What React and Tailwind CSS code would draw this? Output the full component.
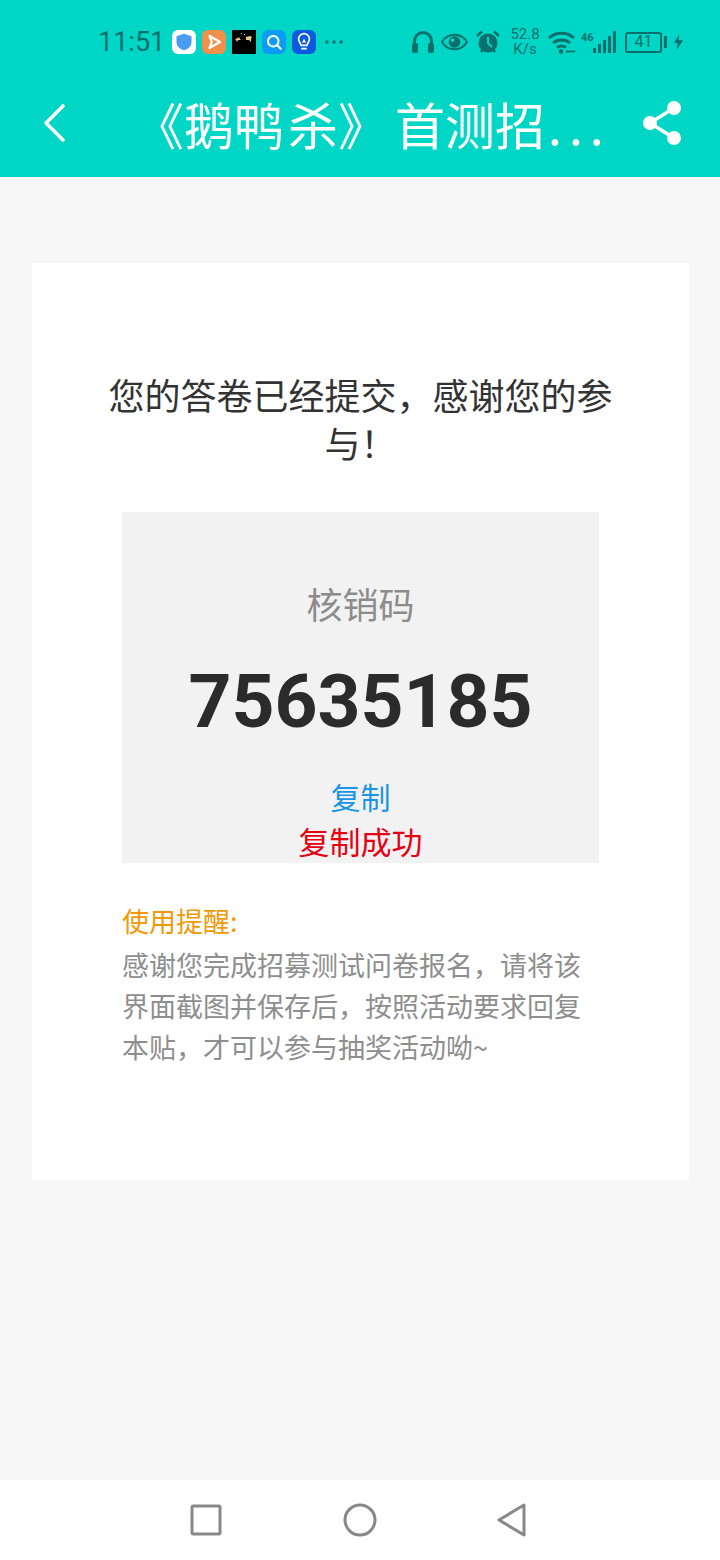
const cjk = { fontFamily: '"Noto Sans CJK SC", sans-serif' }

function StatusBar() {
  return (
    <div className="flex h-[84px] items-center pl-[98px] pr-[37px] text-[#0b6f6b]">
      <span className="text-[27px] leading-none font-['Roboto',sans-serif]">11:51</span>
      <div className="ml-[7px] flex items-center gap-[6px]">
        <span className="flex h-6 w-6 items-center justify-center rounded-[6px] bg-white">
          <svg viewBox="0 0 24 24" className="h-5 w-5"><path d="M12 2l9 3v7c0 5-4 8.500-9 10-5-1.500-9-5-9-10V5z" fill="#4a9cf0" /></svg>
        </span>
        <span className="flex h-6 w-6 items-center justify-center rounded-[6px] bg-[#f0904a]">
          <svg viewBox="0 0 24 24" className="h-[18px] w-[18px]"><path d="M6 4l14 8-14 8 3-8z" fill="none" stroke="#fff" strokeWidth="3" strokeLinejoin="round" /></svg>
        </span>
        <span className="flex h-6 w-6 items-start justify-center bg-black">
          <svg viewBox="0 0 24 24" className="h-6 w-6"><path d="M14 7l4-1 2 1-1 2 0 3-2-2-3 0zM3 9l3-1 1-1 1 2 1 1-3 0-1 2-1-2zM9 3h1v1H9zM12 4h1v1h-1z" fill="#eccb8f" /></svg>
        </span>
        <span className="flex h-6 w-6 items-center justify-center rounded-[6px] bg-[#0c9cf5]">
          <svg viewBox="0 0 24 24" className="h-[18px] w-[18px]" fill="none" stroke="#fff" strokeWidth="2.600" strokeLinecap="round"><circle cx="11" cy="11" r="7" /><path d="M16 16l5 5" /></svg>
        </span>
        <span className="flex h-6 w-6 items-center justify-center rounded-[6px] bg-[#0b5be0]">
          <svg viewBox="0 0 24 24" className="h-5 w-5" fill="none" stroke="#fff" strokeWidth="2" strokeLinecap="round"><path d="M8.500 16c0-2-3-3.500-3-7.500a6.500 6.500 0 0113 0c0 4-3 5.500-3 7.500zM9.500 20h5M11 12l1-2 1 2" /></svg>
        </span>
        <svg viewBox="0 0 18 4" className="ml-[3px] h-1 w-[18px]" fill="#0b6f6b"><circle cx="2" cy="2" r="1.700" /><circle cx="9" cy="2" r="1.700" /><circle cx="16" cy="2" r="1.700" /></svg>
      </div>
      <div className="ml-auto flex items-center">
        <svg viewBox="0 0 22 24" className="h-6 w-[22px]" fill="none" stroke="#0b6f6b" strokeWidth="3"><path d="M2.500 17v-6a8.500 8.500 0 0117 0v6" /><rect x="0" y="13" width="6" height="10" rx="2" fill="#0b6f6b" stroke="none" /><rect x="16" y="13" width="6" height="10" rx="2" fill="#0b6f6b" stroke="none" /></svg>
        <svg viewBox="0 0 28 18" className="ml-[7px] h-[18px] w-[27px]"><path d="M1 9c3-5 8-7.500 13-7.500S24 4 27 9c-3 5-8 7.500-13 7.500S4 14 1 9z" fill="none" stroke="#0b6f6b" strokeWidth="2.200" /><circle cx="14" cy="9" r="6" fill="#0b6f6b" /><circle cx="12" cy="7" r="2" fill="#00d6c6" /></svg>
        <svg viewBox="0 0 24 24" className="ml-[8px] h-6 w-6"><circle cx="12" cy="13" r="9.500" fill="#0b6f6b" /><path d="M12 7v6l4 4" fill="none" stroke="#00d6c6" strokeWidth="2" /><path d="M1 6l5-4.500M23 6l-5-4.500M5 22l2-2.500M19 22l-2-2.500" stroke="#0b6f6b" strokeWidth="2.500" /></svg>
        <span className="ml-[10px] flex w-[30px] flex-col items-center text-[15px] leading-[15px] font-['Roboto',sans-serif]"><span>52.8</span><span>K/s</span></span>
        <svg viewBox="0 0 27 24" className="ml-[8px] h-6 w-[27px]" fill="none" stroke="#0b6f6b" strokeWidth="3"><path d="M1 8c7-6.500 18-6.500 25 0M5 13c4.500-4 12.500-4 17 0M9 17.500c2.500-2 6.500-2 9 0" /><circle cx="13" cy="21.500" r="2.300" fill="#0b6f6b" stroke="none" /><path d="M18 21.500h9" strokeWidth="1.800" /></svg>
        <span className="ml-[6px] mb-[10px] w-[12px] text-[11px] leading-none font-bold font-['Roboto',sans-serif]">46</span>
        <div className="flex h-[22px] w-[23px] items-end justify-between">
          {[5, 9, 13, 17, 22].map((h) => <span key={h} className="w-[3px] bg-[#0b6f6b]" style={{ height: h }} />)}
        </div>
        <span className="ml-[9px] flex h-[21px] w-[37px] items-center justify-center rounded-[3px] border-2 border-[#0b6f6b] text-[16px] leading-none font-['Roboto',sans-serif]">41</span>
        <span className="ml-[2px] h-[12px] w-[3px] bg-[#0b6f6b]" />
        <svg viewBox="0 0 10 18" className="ml-[7px] h-[18px] w-[9px]"><path d="M6 0L0 10h4l-1 8 7-11H5z" fill="#0b6f6b" /></svg>
      </div>
    </div>
  )
}

export default function App() {
  return (
    <div className="flex h-[1560px] w-[720px] flex-col bg-[#f7f7f7]" style={cjk}>
      <div className="h-[177px] shrink-0 bg-[#00d6c6]">
        <StatusBar />
        <div className="flex h-[93px] items-start pt-[9px] text-white">
          <svg viewBox="0 0 24 40" className="ml-[42px] mt-[10px] h-[40px] w-[24px]" fill="none" stroke="#fff" strokeWidth="3.600" strokeLinecap="round" strokeLinejoin="round"><path d="M21 3L4 20l17 17" /></svg>
          <span className="ml-[68px] w-[473px] whitespace-nowrap text-[50px] leading-[60px]">
            《鹅<span className="tracking-[4px]">鸭</span>杀<span className="tracking-[7px]">》</span>首测招<span className="ml-[3px] tracking-[7px]">...</span>
          </span>
          <svg viewBox="0 0 38 44" className="ml-[36px] mt-[8px] h-[44px] w-[38px]" fill="#fff"><circle cx="31" cy="7" r="7" /><circle cx="7" cy="22" r="7" /><circle cx="31" cy="37" r="7" /><path d="M31 7L7 22l24 15" fill="none" stroke="#fff" strokeWidth="3.500" /></svg>
        </div>
      </div>
      <div className="flex-1 pl-[32px] pt-[86px]">
        <div className="h-[917px] w-[657px] bg-white pt-[107px]">
          <p className="mx-auto w-[510px] text-center text-[36px] leading-[48px] text-[#333]">您的答卷已经提交，感谢您的参与！</p>
          <div className="ml-[90px] mt-[46px] flex h-[351px] w-[477px] flex-col items-center bg-[#f2f2f2] pt-[64px]">
            <p className="text-[36px] leading-[54px] text-[#8c8c8c]">核销码</p>
            <p className="mt-[26px] font-['Roboto',sans-serif] text-[75px] leading-[90px] font-bold text-[#2b2b2b]">75635185</p>
            <p className="mt-[28px] text-[30px] leading-[44px] text-[#1a94e6]">复制</p>
            <p className="text-[31px] leading-[46px] text-[#e60012]">复制成功</p>
          </div>
          <div className="ml-[90px] mt-[37px] w-[470px] text-[27px] leading-[41px]">
            <p className="text-[#f09a0a]">使用提醒:</p>
            <p className="mt-[3px] text-[#8e8e8e]">感谢您完成招募测试问卷报名，请将该界面截图并保存后，按照活动要求回复本贴，才可以参与抽奖活动呦~</p>
          </div>
        </div>
      </div>
      <div className="flex h-[80px] shrink-0 items-center bg-white pb-[1px]">
        <svg viewBox="0 0 32 32" className="ml-[190px] h-8 w-8" fill="none" stroke="#888" strokeWidth="3" strokeLinejoin="round"><rect x="2" y="2" width="28" height="28" rx="1.500" /></svg>
        <svg viewBox="0 0 34 34" className="ml-[121px] h-[34px] w-[34px]" fill="none" stroke="#888" strokeWidth="3"><circle cx="17" cy="17" r="15" /></svg>
        <svg viewBox="0 0 30 34" className="ml-[120px] h-[34px] w-[30px]" fill="none" stroke="#888" strokeWidth="3" strokeLinejoin="round"><path d="M27 2L2 17l25 15z" /></svg>
      </div>
    </div>
  )
}
